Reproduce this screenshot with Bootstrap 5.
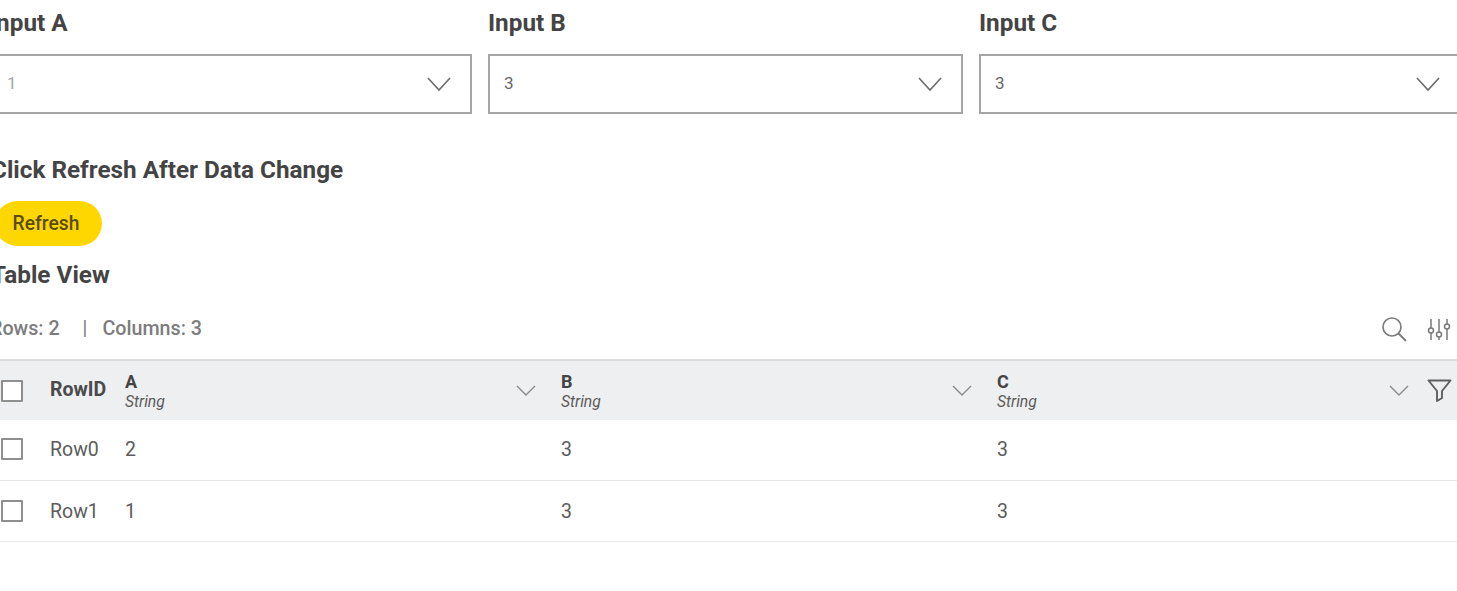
<!DOCTYPE html>
<html lang="en">
<head>
<meta charset="utf-8">
<title>Table View</title>
<link href="https://cdn.jsdelivr.net/npm/bootstrap@5.3.0/dist/css/bootstrap.min.css" rel="stylesheet">
<style>
html,body{overflow:hidden;height:591px;background:#fff}
body{font-family:Roboto,"Liberation Sans",sans-serif;color:#4a4a4a}
.pg{width:1470px;margin-left:-5px;padding-top:9px}
.inputs{display:grid;grid-template-columns:477px 475px 482px;column-gap:16px}
.lbl{font-size:24.300px;font-weight:700;color:#444;line-height:27px;margin:0 0 18px}
.lbl-first{margin-left:-6px}
.sel{height:60px;border:2px solid #a5a5a5;display:flex;align-items:center;justify-content:space-between;padding:0 18px 0 14px;font-size:17px;color:#666;background:#fff}
.sel.dim{color:#a3a8a8;padding-left:10px}
.sec{font-size:24.300px;font-weight:700;color:#444;line-height:27px;margin-left:-4px}
.sec1{margin-top:42px;margin-bottom:18px}
.rbtn{background:#ffd700;border:0;border-radius:23px;height:45px;width:107px;padding:2px 5px 0 0;font-size:19.300px;font-weight:500;color:#5a4a10;display:block;margin-bottom:15px}
.sum{height:71px;font-size:19.700px;font-weight:500;color:#7c7c7c;padding:10px 14px 0 0}
.sum-l{margin-left:-5px}
.sum .bar{margin:0 15px 0 23px;font-weight:400}
.sum-i{display:flex;align-items:center;gap:20px}
.tw{table-layout:fixed;width:1462px;margin:0;border-collapse:collapse;--bs-table-bg:transparent}
.tw th,.tw td{padding:0;vertical-align:middle;border-bottom:1px solid #e8e8e8;box-shadow:none}
.tw thead tr{background:#eeeff1;height:60px;border-top:2px solid #dcdcdc}
.tw thead th{border-bottom:0;font-weight:400}
.tw tbody tr{height:60px}
.tw tbody tr:nth-child(2){height:61px}
.tw tbody td{padding-bottom:1px}
.tw tbody tr:nth-child(2) td{padding-bottom:0;padding-top:2px}
.c0{width:55px}.c1{width:75px}.c2,.c3{width:436px}.c4{width:460px}
.ck{display:block;width:22px;height:22px;border:2px solid #8f8f8f;background:#fff;margin-left:6px;border-radius:1px}
.tw tbody tr:nth-child(2) .ck{position:relative;top:-1px}
.tw thead th.rid{font-size:19.500px;font-weight:700;color:#4a4a4a;padding-bottom:2px}
.cellt{font-size:19.500px;color:#5c5c5c}
.hd{display:flex;align-items:center;justify-content:space-between;padding-right:25px}
.hd>div:first-child{padding-top:2px}
.hn{font-size:18px;font-weight:700;color:#444;line-height:20px}
.ht{font-size:15.700px;font-style:italic;color:#5a5a5a;line-height:20px}
.lastc{display:flex;align-items:center;justify-content:space-between;padding-right:5px}
.lastc .hd{padding-right:0;width:412px}
</style>
</head>
<body>
<div class="pg">
  <div class="inputs">
    <div><div class="lbl lbl-first">Input A</div><div class="sel dim"><span>1</span><svg width="26" height="16" viewBox="0 0 26 16"><path d="M2 2l11 12L24 2" fill="none" stroke="#6e6e6e" stroke-width="1.7"/></svg></div></div>
    <div><div class="lbl">Input B</div><div class="sel"><span>3</span><svg width="26" height="16" viewBox="0 0 26 16"><path d="M2 2l11 12L24 2" fill="none" stroke="#6e6e6e" stroke-width="1.7"/></svg></div></div>
    <div><div class="lbl">Input C</div><div class="sel"><span>3</span><svg width="26" height="16" viewBox="0 0 26 16"><path d="M2 2l11 12L24 2" fill="none" stroke="#6e6e6e" stroke-width="1.7"/></svg></div></div>
  </div>
  <div class="sec sec1">Click Refresh After Data Change</div>
  <button type="button" class="btn rbtn">Refresh</button>
  <div class="sec">Table View</div>
  <div class="sum d-flex align-items-center justify-content-between">
    <div class="sum-l"><span>Rows: 2</span><span class="bar">|</span><span>Columns: 3</span></div>
    <div class="sum-i">
      <svg width="26" height="26" viewBox="0 0 26 26"><circle cx="11" cy="11" r="9" fill="none" stroke="#7a7a7a" stroke-width="1.6"/><path d="M17.5 17.5L25 25" stroke="#7a7a7a" stroke-width="1.8"/></svg>
      <svg width="24" height="24" viewBox="0 0 24 24" fill="none" stroke="#7a7a7a" stroke-width="1.5"><path d="M4 2v9M4 16v7M12 2v13M12 20v3M20 2v5M20 12v11"/><circle cx="4" cy="13.500" r="2.500"/><circle cx="12" cy="17.500" r="2.500"/><circle cx="20" cy="9.500" r="2.500"/></svg>
    </div>
  </div>
  <table class="table tw">
    <colgroup><col class="c0"><col class="c1"><col class="c2"><col class="c3"><col class="c4"></colgroup>
    <thead>
      <tr>
        <th><span class="ck"></span></th>
        <th class="rid">RowID</th>
        <th><div class="hd"><div><div class="hn">A</div><div class="ht">String</div></div><svg width="20" height="12" viewBox="0 0 20 12"><path d="M1 1l9 9 9-9" fill="none" stroke="#8a8a8a" stroke-width="1.4"/></svg></div></th>
        <th><div class="hd"><div><div class="hn">B</div><div class="ht">String</div></div><svg width="20" height="12" viewBox="0 0 20 12"><path d="M1 1l9 9 9-9" fill="none" stroke="#8a8a8a" stroke-width="1.4"/></svg></div></th>
        <th><div class="lastc"><div class="hd"><div><div class="hn">C</div><div class="ht">String</div></div><svg width="20" height="12" viewBox="0 0 20 12"><path d="M1 1l9 9 9-9" fill="none" stroke="#8a8a8a" stroke-width="1.4"/></svg></div><svg width="25" height="23" viewBox="0 0 25 23"><path d="M1.500 1.500h22L15 12v7l-5 3V12z" fill="none" stroke="#5f5f5f" stroke-width="1.900" stroke-linejoin="round"/></svg></div></th>
      </tr>
    </thead>
    <tbody>
      <tr><td><span class="ck"></span></td><td class="cellt">Row0</td><td class="cellt">2</td><td class="cellt">3</td><td class="cellt">3</td></tr>
      <tr><td><span class="ck"></span></td><td class="cellt">Row1</td><td class="cellt">1</td><td class="cellt">3</td><td class="cellt">3</td></tr>
    </tbody>
  </table>
</div>
<script src="https://cdn.jsdelivr.net/npm/bootstrap@5.3.0/dist/js/bootstrap.bundle.min.js"></script>
</body>
</html>
